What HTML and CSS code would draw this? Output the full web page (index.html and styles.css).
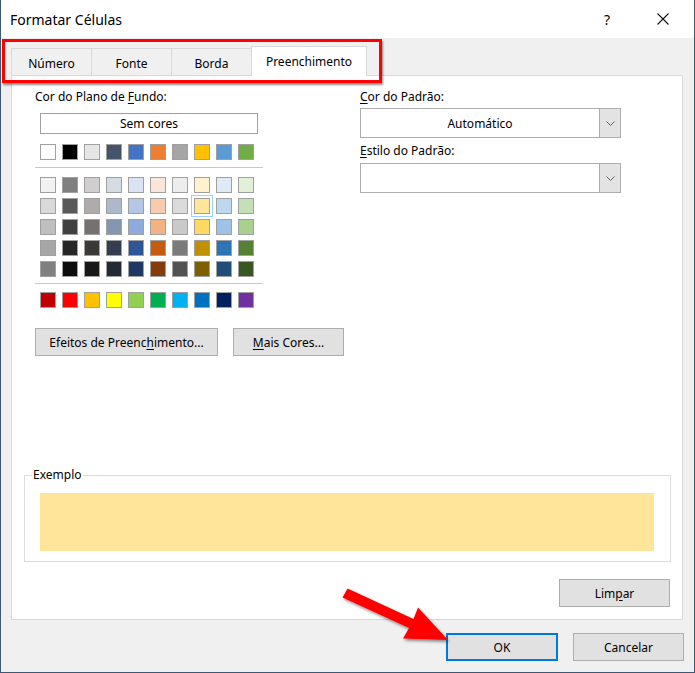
FILE: index.html
```html
<!DOCTYPE html>
<html lang="pt">
<head>
<meta charset="utf-8">
<title>Formatar Células</title>
<link rel="stylesheet" href="styles.css">
</head>
<body>
<div class="window">
  <div class="titlebar">
    <span class="title">Formatar Células</span>
    <span class="help">?</span>
    <svg class="close" width="12" height="12" viewBox="0 0 12 12"><path d="M0.5 0.5 L11.5 11.5 M11.5 0.5 L0.5 11.5" stroke="#111" stroke-width="1.1" fill="none"/></svg>
  </div>

  <div class="tabs">
    <div class="tab t1">Número</div>
    <div class="tab t2">Fonte</div>
    <div class="tab t3">Borda</div>
    <div class="tab active">Preenchimento</div>
  </div>

  <div class="panel">
    <div class="top">
      <div class="leftcol">
        <div class="label">Cor do Plano de <u>F</u>undo:</div>
        <div class="nocolor">Sem cores</div>
        <div class="grid row0">
          <i style="background:#FFFFFF"></i><i style="background:#000000"></i><i style="background:#E7E6E6"></i><i style="background:#44546A"></i><i style="background:#4472C4"></i><i style="background:#ED7D31"></i><i style="background:#A5A5A5"></i><i style="background:#FFC000"></i><i style="background:#5B9BD5"></i><i style="background:#70AD47"></i>
        </div>
        <div class="sep sep1"></div>
        <div class="grid shades">
          <i style="background:#F2F2F2"></i><i style="background:#7F7F7F"></i><i style="background:#D0CECE"></i><i style="background:#D6DCE5"></i><i style="background:#DAE3F3"></i><i style="background:#FBE5D6"></i><i style="background:#EDEDED"></i><i style="background:#FFF2CC"></i><i style="background:#DEEBF7"></i><i style="background:#E2F0D9"></i>
          <i style="background:#D9D9D9"></i><i style="background:#595959"></i><i style="background:#AFABAB"></i><i style="background:#ADB9CA"></i><i style="background:#B4C7E7"></i><i style="background:#F8CBAD"></i><i style="background:#DBDBDB"></i><i class="sel" style="background:#FFE699"></i><i style="background:#BDD7EE"></i><i style="background:#C5E0B4"></i>
          <i style="background:#BFBFBF"></i><i style="background:#404040"></i><i style="background:#767171"></i><i style="background:#8497B0"></i><i style="background:#8FAADC"></i><i style="background:#F4B183"></i><i style="background:#C9C9C9"></i><i style="background:#FFD966"></i><i style="background:#9DC3E6"></i><i style="background:#A9D18E"></i>
          <i style="background:#A6A6A6"></i><i style="background:#262626"></i><i style="background:#3B3838"></i><i style="background:#333F50"></i><i style="background:#2F5597"></i><i style="background:#C55A11"></i><i style="background:#7B7B7B"></i><i style="background:#BF9000"></i><i style="background:#2E75B6"></i><i style="background:#548235"></i>
          <i style="background:#808080"></i><i style="background:#0D0D0D"></i><i style="background:#171717"></i><i style="background:#222A35"></i><i style="background:#203864"></i><i style="background:#843C0C"></i><i style="background:#525252"></i><i style="background:#7F6000"></i><i style="background:#1F4E79"></i><i style="background:#385723"></i>
        </div>
        <div class="sep sep2"></div>
        <div class="grid std">
          <i style="background:#C00000"></i><i style="background:#FF0000"></i><i style="background:#FFC000"></i><i style="background:#FFFF00"></i><i style="background:#92D050"></i><i style="background:#00B050"></i><i style="background:#00B0F0"></i><i style="background:#0070C0"></i><i style="background:#002060"></i><i style="background:#7030A0"></i>
        </div>
        <div class="btnrow">
          <div class="btn efeitos">Efeitos de Preenc<u>h</u>imento...</div>
          <div class="btn mais"><u>M</u>ais Cores...</div>
        </div>
      </div>

      <div class="rightcol">
        <div class="label"><u>C</u>or do Padrão:</div>
        <div class="dropdown dd1">
          <div class="value">Automático</div>
          <div class="arrow"><svg width="9" height="5" viewBox="0 0 9 5"><path d="M0.5 0.5 L4.5 4.5 L8.5 0.5" stroke="#606060" stroke-width="1" fill="none"/></svg></div>
        </div>
        <div class="label lbl2"><u>E</u>stilo do Padrão:</div>
        <div class="dropdown dd2">
          <div class="value"></div>
          <div class="arrow"><svg width="9" height="5" viewBox="0 0 9 5"><path d="M0.5 0.5 L4.5 4.5 L8.5 0.5" stroke="#606060" stroke-width="1" fill="none"/></svg></div>
        </div>
      </div>
    </div>

    <div class="bottom">
      <fieldset class="example">
        <legend>Exemplo</legend>
        <div class="preview"></div>
      </fieldset>
      <div class="btn limpar">Lim<u>p</u>ar</div>
    </div>
  </div>

  <div class="footer">
    <div class="btn ok">OK</div>
    <div class="btn cancel">Cancelar</div>
  </div>

  <div class="redbox"></div>
  <svg class="arrowmark" width="140" height="80" viewBox="330 575 140 80">
    <defs>
      <filter id="sh" x="-20%" y="-20%" width="140%" height="140%">
        <feDropShadow dx="1.5" dy="2" stdDeviation="1.5" flood-color="#000" flood-opacity="0.45"/>
      </filter>
    </defs>
    <polygon filter="url(#sh)" fill="#f00" points="347.5,588.5 413.5,619 418,607.5 448,640 403,638.5 409,628 342.5,597.5"/>
  </svg>
</div>
</body>
</html>
```

FILE: styles.css
```css
* { box-sizing: border-box; }
html, body { margin: 0; padding: 0; background: #fff; }
body {
  font-family: "Noto Sans", "Open Sans", sans-serif;
  font-size: 12px;
  color: #000;
}
u { text-decoration: underline; text-underline-offset: 2px; }

.window {
  position: relative;
  width: 695px;
  height: 673px;
  background: #f0f0f0;
  border: 1px solid #3c5873;
  border-top: none;
  display: flex;
  flex-direction: column;
}

.titlebar {
  height: 38px;
  background: #fff;
  display: flex;
  align-items: center;
  padding-left: 9px;
  flex: none;
}
.title { font-size: 14px; flex: 1; }
.help { font-size: 14px; margin-right: 47px; }
.close { margin-right: 25px; }

.tabs {
  display: flex;
  align-items: flex-end;
  height: 28px;
  margin-top: 9px;
  margin-left: 10px;
  position: relative;
  z-index: 2;
  flex: none;
}
.tab {
  height: 27px;
  border: 1px solid #d9d9d9;
  border-bottom: none;
  background: #f0f0f0;
  display: flex;
  align-items: center;
  justify-content: center;
  padding-top: 2px;
  margin-right: -1px;
}
.t1 { width: 81px; }
.t2 { width: 81px; }
.t3 { width: 81px; }
.tab.active {
  width: 116px;
  height: 30px;
  background: #fff;
  margin-bottom: -1px;
  padding-top: 0;
  padding-bottom: 0;
}

.panel {
  height: 545px;
  margin: 0 11px 0 10px;
  background: #fff;
  border: 1px solid #d9d9d9;
  padding: 13px 0 12px 23px;
  display: flex;
  flex-direction: column;
  flex: none;
}

.top { display: flex; }
.label { line-height: 16px; height: 16px; white-space: nowrap; }

.leftcol { width: 228px; flex: none; }
.nocolor {
  margin: 8px 0 0 5px;
  width: 218px;
  height: 21px;
  border: 1px solid #a0a0a0;
  display: flex;
  align-items: center;
  justify-content: center;
}
.grid {
  display: grid;
  grid-template-columns: repeat(10, 16px);
  column-gap: 6px;
  row-gap: 5px;
  margin-left: 5px;
}
.grid i {
  display: block;
  width: 16px;
  height: 16px;
  border: 1px solid #a0a0a0;
}
.grid i.sel { outline: 1px solid #99d1ff; outline-offset: 2px; }
.row0 { margin-top: 10px; }
.sep { height: 1px; background: #c8c8c8; width: 228px; }
.sep1 { margin-top: 7px; }
.shades { margin-top: 9px; }
.sep2 { margin-top: 6px; }
.std { margin-top: 8px; }

.btnrow { display: flex; gap: 15px; margin-top: 20px; width: 320px; }
.btn {
  height: 28px;
  background: #e1e1e1;
  border: 1px solid #adadad;
  display: flex;
  align-items: center;
  justify-content: center;
  white-space: nowrap;
  flex: none;
}
.efeitos { width: 183px; }
.mais { width: 111px; }

.rightcol { margin-left: 97px; width: 261px; flex: none; }
.dropdown {
  display: flex;
  width: 261px;
  height: 30px;
  border: 1px solid #adadad;
  background: #fff;
}
.dd1 { margin-top: 3px; }
.lbl2 { margin-top: 5px; }
.dd2 { margin-top: 4px; height: 30px; }
.dropdown .value {
  flex: 1;
  display: flex;
  align-items: center;
  justify-content: center;
}
.dropdown .arrow {
  width: 21px;
  background: #e3e3e3;
  border-left: 1px solid #adadad;
  display: flex;
  align-items: center;
  justify-content: center;
}

.bottom { margin-top: auto; display: flex; flex-direction: column; }
.example {
  margin: 0 0 0 -11px;
  padding: 10px 15px 10px 15px;
  width: 647px;
  border: 1px solid #dcdcdc;
  min-width: 0;
}
.example legend {
  padding: 0 1px;
  margin-left: -8px;
  line-height: 16px;
}
.preview {
  width: 614px;
  height: 58px;
  background: #fee599;
}
.limpar {
  width: 111px;
  margin-top: 17px;
  align-self: flex-end;
  margin-right: 12px;
}

.footer {
  display: flex;
  justify-content: flex-end;
  gap: 15px;
  margin-top: 13px;
  margin-right: 10px;
}
.ok { width: 112px; border: 2px solid #0078d7; }
.cancel { width: 111px; }

.redbox {
  position: absolute;
  left: 1px;
  top: 39px;
  width: 380px;
  height: 44px;
  border: 3px solid #f00;
  box-shadow: 1px 2px 2px rgba(0,0,0,0.45);
}
.arrowmark {
  position: absolute;
  left: 329px;
  top: 575px;
}
```
